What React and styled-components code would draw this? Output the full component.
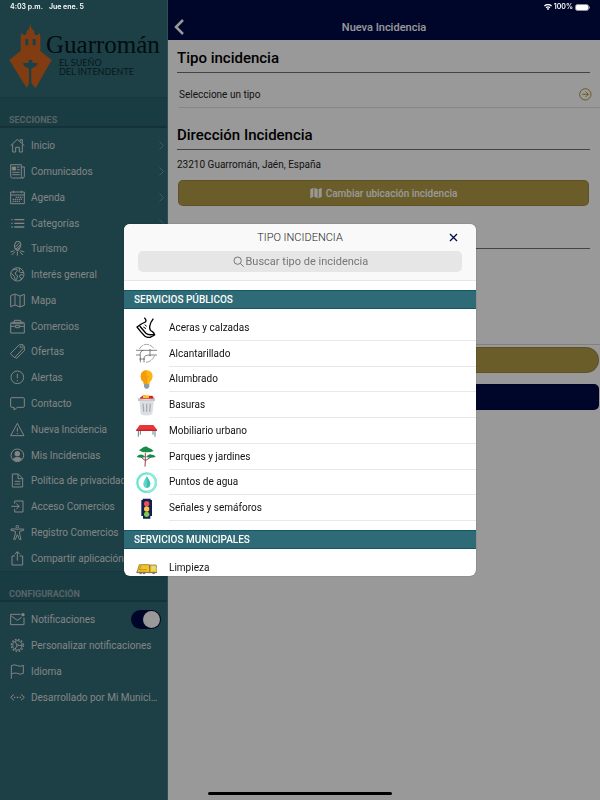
import React, { useState } from 'react';
import styled, { createGlobalStyle } from 'styled-components';

const GlobalStyle = createGlobalStyle`
  * {
    box-sizing: border-box;
  }

  body {
    margin: 0;
    background: #ffffff;
    color: #000000;
    font-family: Roboto, "Liberation Sans", sans-serif;
    font-size: 10px;
  }

  button, input {
    font: inherit;
  }

  h1, h2, h3, p, ul {
    margin: 0;
    padding: 0;
  }

  ul {
    list-style: none;
  }
`;

const Page = styled.div`
  display: grid;
  grid-template-columns: 28% 1fr;
  min-height: 100vh;
`;

const StatusBar = styled.div`
  position: fixed;
  top: 0;
  left: 0;
  right: 0;
  z-index: 3;
  display: flex;
  justify-content: space-between;
  padding: 0 10px;
  color: #ffffff;
  font-family: Inter, sans-serif;
  font-size: 7px;
  font-weight: 600;
  line-height: 14px;
`;

const StatusGroup = styled.div`
  display: flex;
  align-items: center;
  gap: ${props => props.$gap}px;
`;

const HomeIndicator = styled.div`
  position: fixed;
  bottom: 5px;
  left: 50%;
  z-index: 3;
  width: 184px;
  height: 3px;
  border-radius: 2px;
  background: #000000;
  transform: translateX(-50%);
`;

const Sidebar = styled.aside`
  background: #2f6b76;
  border-right: 1px solid #4d7f88;
  min-width: 0;
`;

const Logo = styled.a`
  display: flex;
  padding: 23px 0 8px 9px;
  color: #06141a;
  text-decoration: none;
`;

const LogoText = styled.div`
  margin-left: -6px;
  padding-top: 8px;
  white-space: nowrap;
`;

const LogoName = styled.div`
  font-family: "Liberation Serif", serif;
  font-size: 25px;
  line-height: 27px;
`;

const LogoSlogan = styled.div`
  padding-left: 13px;
  color: #0d2a31;
  font-family: Lato, sans-serif;
  font-size: 9px;
  line-height: 9px;
`;

const SideHeading = styled.h2`
  height: 31px;
  padding: 15px 9px 0;
  background: #2b6570;
  border-top: 1px solid #275d68;
  border-bottom: 2px solid #23545e;
  color: #93a6ab;
  font-size: 9px;
  font-weight: 700;
  line-height: 14px;
`;

const SideList = styled.ul`
  display: grid;
  grid-template-columns: minmax(0, 1fr);
  grid-auto-rows: 1fr;
  min-height: ${props => props.$height}px;
  margin-top: 5px;
`;

const SideRow = styled.li`
  display: flex;
  align-items: center;
  padding-right: 6px;
`;

const SideLink = styled.a`
  display: flex;
  align-items: center;
  flex: 1;
  gap: 6px;
  min-width: 0;
  padding-left: 10px;
  color: #dcdcdc;
  text-decoration: none;
`;

const SideLabel = styled.span`
  flex: 1;
  overflow: hidden;
  text-overflow: ellipsis;
  white-space: nowrap;
`;

const LineIcon = styled.svg`
  flex: none;
  width: 15px;
  height: 15px;
  fill: none;
  stroke: #dcdcdc;
  stroke-width: 3;
  stroke-linejoin: round;
`;

const Chevron = styled.svg`
  flex: none;
  width: 5px;
  height: 9px;
  margin-right: -3px;
  fill: none;
  stroke: #6c949c;
`;

const Toggle = styled.input`
  appearance: none;
  display: flex;
  flex: none;
  width: 30px;
  height: 19px;
  margin: 0;
  padding: 1px;
  border-radius: 10px;
  background: #909ba0;
  cursor: pointer;

  &::before {
    content: '';
    width: 17px;
    height: 17px;
    border-radius: 50%;
    background: #ffffff;
  }

  &:checked {
    justify-content: flex-end;
    background: #000a46;
  }
`;

const Main = styled.main`
  min-width: 0;
`;

const TopBar = styled.header`
  display: grid;
  grid-template-columns: 24px 1fr 24px;
  align-items: center;
  padding-top: 14px;
  height: 40px;
  background: #000a46;
`;

const BackButton = styled.button`
  padding: 0 0 0 6px;
  border: 0;
  background: none;
  line-height: 0;
  text-align: left;
  cursor: pointer;
`;

const TopTitle = styled.h1`
  color: #ffffff;
  font-size: 11px;
  font-weight: 500;
  text-align: center;
`;

const Block = styled.section`
  padding: 8px 10px 0 9px;
`;

const BlockTitle = styled.h2`
  height: 25px;
  border-bottom: 1px solid #707070;
  font-size: 15px;
  font-weight: 500;
  line-height: 20px;
`;

const TypeButton = styled.button`
  display: flex;
  align-items: center;
  justify-content: space-between;
  width: calc(100% - 11px);
  height: 26px;
  margin: 9px 0 9px 11px;
  padding: 0 8px 0 0;
  border: 0;
  border-bottom: 1px solid #e0e0e0;
  background: none;
  color: #222222;
  text-align: left;
`;

const Address = styled.p`
  height: 30px;
  color: #222222;
  line-height: 30px;
`;

const ActionButton = styled.button`
  display: flex;
  align-items: center;
  justify-content: center;
  gap: 4px;
  width: calc(100% - 2px);
  height: 26px;
  margin: 0 1px ${props => props.$after || 0}px;
  border: 1px solid rgba(0, 0, 0, 0.12);
  border-radius: ${props => (props.$round ? 13 : 5)}px;
  background: ${props => (props.$dark ? '#000a46' : '#b39b46')};
  color: #ffffff;
  font-weight: 500;
`;

const Rule = styled.hr`
  height: 1px;
  margin: ${props => props.$before}px 0 0;
  border: 0;
  background: ${props => (props.$light ? '#d8d8d8' : '#707070')};
`;

const Actions = styled.div`
  padding-top: 2px;
`;

const Backdrop = styled.div`
  position: fixed;
  inset: 0;
  z-index: 2;
  display: flex;
  align-items: center;
  justify-content: center;
  background: rgba(0, 0, 0, 0.4);
`;

const Modal = styled.div`
  display: flex;
  flex-direction: column;
  width: 352px;
  max-width: 100%;
  height: 352px;
  max-height: 100%;
  overflow: hidden;
  border-radius: 6px;
  background: #ffffff;
  box-shadow: 0 0 1px rgba(0, 0, 0, 0.7);
`;

const ModalHeader = styled.header`
  flex: none;
  height: 57px;
  padding: 0 14px;
  background: #f9f9f9;
  border-bottom: 1px solid #e6e6e6;
`;

const ModalTitleRow = styled.div`
  display: grid;
  grid-template-columns: 1fr auto 1fr;
  align-items: center;
  height: 27px;
`;

const ModalTitle = styled.h2`
  grid-column: 2;
  color: #222222;
  font-size: 11px;
  font-weight: 300;
`;

const CloseButton = styled.button`
  justify-self: end;
  padding: 4px;
  border: 0;
  background: none;
  line-height: 0;
  cursor: pointer;
`;

const SearchBox = styled.label`
  display: flex;
  align-items: center;
  justify-content: center;
  gap: 2px;
  height: 21px;
  border-radius: 5px;
  background: #e6e6e6;
`;

const SearchInput = styled.input`
  width: 122px;
  padding: 0;
  border: 0;
  outline: none;
  background: none;
  font-size: 11px;

  &::placeholder {
    color: #767676;
    opacity: 1;
  }
`;

const ModalBody = styled.div`
  flex: 1;
  overflow-y: auto;
  padding-top: 9px;
  scrollbar-width: none;
`;

const GroupTitle = styled.h3`
  height: 19px;
  padding-left: 10px;
  background: #2f6b76;
  border: 1px solid #125967;
  border-width: 1px 0;
  color: #ffffff;
  font-size: 10px;
  font-weight: 500;
  line-height: 17px;
`;

const TypeList = styled.ul`
  display: grid;
  grid-auto-rows: 1fr;
  min-height: ${props => props.$height}px;
  margin: 6px 0 9px;
`;

const TypeRow = styled.li`
  display: flex;
`;

const TypeOption = styled.button`
  display: flex;
  align-items: center;
  flex: 1;
  gap: 12px;
  padding: 0 0 0 12px;
  border: 0;
  background: none;
  text-align: left;
  cursor: pointer;
`;

const TypeLabel = styled.span`
  display: flex;
  align-items: center;
  align-self: stretch;
  flex: 1;
  border-bottom: 1px solid #e8e8e8;
  color: #111111;
`;

const TypeSvg = styled.svg`
  flex: none;
  width: 21px;
  height: 21px;
  fill: none;
`;

// Line icons, drawn on a 45 x 45 grid
const icons = {
  home: <path d="M2 23 L22 4 L43 23 M8 19 V42 H17 V28 H28 V42 H37 V19 M31 10 V5 H37 V17" />,
  news: (
    <>
      <path d="M34 42 H7 Q2 42 2 37 V2 H34 V37 Q34 42 39 42 Q43 42 43 37 V9 H35 M34 42 H39" />
      <path d="M7 9 H17 V18 H7 Z" fill="#dcdcdc" />
      <path d="M21 9 H29 M21 17 H29 M7 25 H29 M7 32 H29" />
    </>
  ),
  agenda: (
    <>
      <path d="M2 6 H43 V41 H2 Z M2 15 H43 M11 2 V9 M34 2 V9" />
      <path d="M17 22 H38 M8 28 H38 M8 34 H32" strokeWidth="4" strokeDasharray="4 2" />
    </>
  ),
  list: (
    <>
      <path d="M13 11 H43 M13 22 H43 M13 33 H43" strokeWidth="4" />
      <path d="M4 11 H8 M4 22 H8 M4 33 H8" strokeWidth="4" />
    </>
  ),
  tourism: (
    <>
      <ellipse cx="23" cy="13" rx="9" ry="12" transform="rotate(18 23 13)" />
      <path d="M15 19 L29 5 M18 24 L32 11 M15 22 L19 28 H26 L28 23 M22 31 V44 M15 32 L5 42 M29 32 L39 42 M13 29 L1 33 M31 29 L43 33" />
    </>
  ),
  globe: (
    <>
      <circle cx="22" cy="22" r="20" />
      <path d="M8 9 L20 6 L22 12 L15 18 L17 23 L23 27 L20 37 L16 40 L13 28 L4 19 M29 4 L27 13 L32 17 L42 16 M41 24 L31 23 L28 29 L34 33 L32 40" />
    </>
  ),
  map: <path d="M2 8 L15 3 L30 9 L43 4 V37 L30 42 L15 36 L2 41 Z M15 3 V36 M30 9 V42" />,
  shop: <path d="M2 13 Q2 10 5 10 H40 Q43 10 43 13 V42 H2 Z M13 10 V4 H32 V10 M2 22 H17 M28 22 H43 M17 19 H28 V26 H17 Z M4 14 H41" />,
  tags: (
    <>
      <path d="M28 2 H39 V14 L14 41 L1 29 Z" />
      <path d="M42 5 L44 7 V19 L20 43 L16 40" />
      <circle cx="32" cy="9" r="2" />
    </>
  ),
  alert: (
    <>
      <circle cx="22" cy="22" r="19" />
      <path d="M22 11 V25 M22 30 V34" />
    </>
  ),
  chat: <path d="M5 5 H40 Q43 5 43 8 V31 Q43 34 40 34 H22 L12 42 V34 H5 Q2 34 2 31 V8 Q2 5 5 5 Z" />,
  warning: <path d="M22 4 L42 41 H2 Z M22 17 V29 M22 33 V36" />,
  user: (
    <>
      <circle cx="22" cy="22" r="19" />
      <circle cx="22" cy="17" r="8" fill="#dcdcdc" stroke="none" />
      <path d="M8 34 Q12 27 22 27 Q32 27 36 34 Q30 40 22 40 Q14 40 8 34 Z" fill="#dcdcdc" stroke="none" />
    </>
  ),
  document: <path d="M7 3 H25 L38 16 V42 H7 Z M24 3 V17 H38 M14 25 H31 M14 33 H31" />,
  login: <path d="M14 14 V6 H39 V39 H14 V30 M4 22 H27 M19 14 L28 22 L19 30" />,
  person: (
    <>
      <circle cx="22" cy="5" r="4" />
      <path d="M3 12 H18 L22 14 L26 12 H41 V16 L29 19 V27 L33 43 H28 L22 29 L16 43 H11 L16 27 V19 L3 16 Z" />
    </>
  ),
  share: <path d="M15 15 H6 V42 H38 V15 H29 M22 29 V2 M14 10 L22 2 L30 10" />,
  mail: (
    <>
      <path d="M32 7 H2 V38 H42 V17 M4 12 L22 25 L35 16" />
      <circle cx="39" cy="8" r="5" fill="#dcdcdc" stroke="none" />
    </>
  ),
  gear: (
    <>
      <circle cx="22" cy="22" r="18" strokeWidth="4" strokeDasharray="5 4.4" />
      <circle cx="22" cy="22" r="14" />
      <circle cx="22" cy="22" r="3" />
      <path d="M25 22 H36 M20 19 L15 10 M20 25 L15 34" />
    </>
  ),
  flag: <path d="M4 44 V5 Q13 0 22 5 Q31 9 40 4 V28 Q31 33 22 28 Q13 25 4 30" />,
  code: (
    <>
      <path d="M12 13 L2 22 L12 31 M33 13 L43 22 L33 31" />
      <path d="M12 22 H16 M20 22 H25 M29 22 H33" strokeWidth="4" />
    </>
  ),
};

// Coloured icons, drawn on a 63 x 63 grid
const typeIcons = {
  sidewalk: (
    <g stroke="#000000" strokeWidth="4" strokeLinejoin="round">
      <path d="M25 2 Q33 9 28 15 L16 21 L3 30 L14 44 L26 57 Q32 62 42 61 L56 54 Q54 46 48 43 Q40 40 41 28 Q42 18 52 5" />
      <path d="M11 27 L29 48 Q37 56 54 52" />
      <path d="M26 23 L32 28 M22 30 L30 35" strokeWidth="3" />
    </g>
  ),
  sewer: (
    <g stroke="#777777" strokeWidth="2">
      <path d="M10 18 Q17 5 32 4 Q47 5 54 18 M56 38 Q47 57 28 58" strokeDasharray="16 2" />
      <path d="M0 22 H22 M42 22 H63 M42 18 V40 M42 36 H63 M0 36 H12 Q13 22 24 22 H42 M13 36 V58 M24 58 V45 Q25 36 42 36 M10 48 H27" stroke="#444444" />
    </g>
  ),
  bulb: (
    <>
      <path d="M32 4 Q50 5 50 23 Q49 32 41 40 V46 H23 V40 Q14 32 14 23 Q14 5 32 4 Z" fill="#fbb516" />
      <path d="M32 4 Q14 5 14 23 Q14 32 23 40 V46 H32 Z" fill="#f59c0b" />
      <path d="M24 21 L32 26 L40 21 M32 26 V44" stroke="#e8930a" strokeWidth="2" />
      <path d="M24 45 H40 V54 L35 59 H29 L24 54 Z" fill="#8e9da5" />
    </>
  ),
  trash: (
    <>
      <path d="M11 9 L22 1 L34 3 L49 2 L55 11 H11 Z" fill="#d8202c" />
      <path d="M21 1 H39 V9 H21 Z" fill="#ffc51c" />
      <path d="M6 10 Q31 17 57 10 V18 H6 Z" fill="#bfc4c9" />
      <path d="M10 17 H54 L49 57 Q31 66 14 57 Z" fill="#dcdee1" />
      <path d="M21 26 L23 50 M32 26 V50 M43 26 L41 50" stroke="#a5adb3" strokeWidth="4" />
    </>
  ),
  bench: (
    <>
      <path d="M7 31 V50 M57 31 V50 M13 29 V44 M51 29 V44" stroke="#56868c" strokeWidth="3" />
      <path d="M11 15 H52 L63 29 V33 H1 V29 Z" fill="#e8353b" />
      <path d="M1 29 H63 V33 H1 Z" fill="#c52229" />
    </>
  ),
  tree: (
    <>
      <path d="M27 62 L28 44 L15 33 M28 44 L45 33 M28 44 V20" stroke="#93414b" strokeWidth="3" />
      <path d="M9 13 Q16 9 22 4 Q31 -1 37 5 Q47 7 53 15 Q41 20 27 18 Q18 20 9 13 Z" fill="#188b46" />
      <path d="M2 33 Q10 23 21 27 L28 33 Q15 37 2 33 Z M30 33 Q39 21 47 26 Q54 25 59 33 Q44 38 30 33 Z" fill="#188b46" />
    </>
  ),
  water: (
    <>
      <circle cx="32" cy="32" r="28" stroke="#6be5cf" strokeWidth="7" />
      <path d="M32 4 A28 28 0 0 1 32 60" stroke="#8eeadb" strokeWidth="7" />
      <path d="M32 13 Q43 29 43 36 Q42 47 32 48 Q22 47 22 36 Q22 29 32 13 Z" fill="#60d6c7" />
      <path d="M32 13 Q43 29 43 36 Q42 47 32 48 Z" fill="#3dbfb4" />
    </>
  ),
  lights: (
    <>
      <path d="M20 2 H44 V6 H48 V54 H43 V62 H21 V54 H16 V6 H20 Z" fill="#10204f" />
      <circle cx="32" cy="17" r="8" fill="#e94f55" />
      <circle cx="32" cy="33" r="8" fill="#ffc44c" />
      <circle cx="32" cy="49" r="8" fill="#83c851" />
    </>
  ),
  truck: (
    <>
      <path d="M3 42 L10 20 H40 L42 44 H3 Z" fill="#f6c21d" stroke="#71652f" strokeWidth="2" />
      <path d="M42 21 H60 L63 31 V44 H42 Z" fill="#ffd22d" stroke="#71652f" strokeWidth="2" />
      <path d="M49 25 H57 L59 32 H49 Z" fill="#c4dbe2" />
      <path d="M15 23 L10 35 H32" stroke="#9b811c" strokeWidth="2" />
      <path d="M1 43 H63" stroke="#777777" strokeWidth="3" />
      <circle cx="14" cy="45" r="4" fill="#777777" />
      <circle cx="24" cy="45" r="4" fill="#777777" />
      <circle cx="53" cy="45" r="4" fill="#777777" />
    </>
  ),
};

const sections = [
  ['home', 'Inicio'],
  ['news', 'Comunicados'],
  ['agenda', 'Agenda'],
  ['list', 'Categorías'],
  ['tourism', 'Turismo'],
  ['globe', 'Interés general'],
  ['map', 'Mapa'],
  ['shop', 'Comercios'],
  ['tags', 'Ofertas'],
  ['alert', 'Alertas'],
  ['chat', 'Contacto'],
  ['warning', 'Nueva Incidencia'],
  ['user', 'Mis Incidencias'],
  ['document', 'Política de privacidad'],
  ['login', 'Acceso Comercios'],
  ['person', 'Registro Comercios'],
  ['share', 'Compartir aplicación'],
];

const settings = [
  ['gear', 'Personalizar notificaciones'],
  ['flag', 'Idioma'],
  ['code', 'Desarrollado por Mi Municipio'],
];

const groups = [
  {
    title: 'SERVICIOS PÚBLICOS',
    height: 206,
    types: [
      ['sidewalk', 'Aceras y calzadas'],
      ['sewer', 'Alcantarillado'],
      ['bulb', 'Alumbrado'],
      ['trash', 'Basuras'],
      ['bench', 'Mobiliario urbano'],
      ['tree', 'Parques y jardines'],
      ['water', 'Puntos de agua'],
      ['lights', 'Señales y semáforos'],
    ],
  },
  {
    title: 'SERVICIOS MUNICIPALES',
    height: 26,
    types: [['truck', 'Limpieza']],
  },
];

const Icon = ({ name }) => (
  <LineIcon viewBox="0 0 45 45" aria-hidden="true">{icons[name]}</LineIcon>
);

const SideItem = ({ icon, label, arrow }) => (
  <SideRow>
    <SideLink href="#">
      <Icon name={icon} />
      <SideLabel>{label}</SideLabel>
    </SideLink>
    {arrow && <Chevron viewBox="0 0 5 9"><path d="M0.5 0.5 L4.5 4.5 L0.5 8.5" /></Chevron>}
  </SideRow>
);

const TownLogo = () => (
  <Logo href="#">
    <svg width="43" height="66" viewBox="0 0 129 198" aria-hidden="true">
      <path
        d="M64 1 L67 16 L75 24 L78 36 H87 L91 29 L94 38 V84 L128 111 L80 195 L67 181 V137 L83 128 L86 121 L70 119 Q72 110 64 110 Q57 110 59 119 L42 121 L45 129 L60 137 V181 L53 195 L1 111 L35 84 V38 L39 29 L43 36 H51 L54 24 L61 16 Z M49 48 V67 H58 V48 Z M71 48 V67 H80 V48 Z"
        fill="#d9641f"
        fillRule="evenodd"
      />
    </svg>
    <LogoText>
      <LogoName>Guarromán</LogoName>
      <LogoSlogan>EL SUEÑO<br />DEL INTENDENTE</LogoSlogan>
    </LogoText>
  </Logo>
);

const TypeModal = ({ onClose }) => {
  const [query, setQuery] = useState('');

  return (
    <Backdrop>
      <Modal role="dialog" aria-labelledby="modal-title">
        <ModalHeader>
          <ModalTitleRow>
            <ModalTitle id="modal-title">TIPO INCIDENCIA</ModalTitle>
            <CloseButton type="button" aria-label="Cerrar" onClick={onClose}>
              <svg width="9" height="9" viewBox="0 0 9 9" stroke="#000a46" strokeWidth="1.3">
                <path d="M1 1 L8 8 M8 1 L1 8" />
              </svg>
            </CloseButton>
          </ModalTitleRow>
          <SearchBox>
            <svg width="11" height="11" viewBox="0 0 33 33" fill="none" stroke="#767676" strokeWidth="3" aria-hidden="true">
              <circle cx="14" cy="14" r="11" />
              <path d="M22 22 L32 32" />
            </svg>
            <SearchInput
              aria-label="Buscar tipo de incidencia"
              placeholder="Buscar tipo de incidencia"
              value={query}
              onChange={e => setQuery(e.target.value)}
            />
          </SearchBox>
        </ModalHeader>
        <ModalBody>
          {groups.map(group => (
            <section key={group.title}>
              <GroupTitle>{group.title}</GroupTitle>
              <TypeList $height={group.height}>
                {group.types
                  .filter(([, label]) => label.toLowerCase().includes(query.toLowerCase()))
                  .map(([icon, label]) => (
                    <TypeRow key={label}>
                      <TypeOption type="button" onClick={onClose}>
                        <TypeSvg viewBox="0 0 63 63" aria-hidden="true">{typeIcons[icon]}</TypeSvg>
                        <TypeLabel>{label}</TypeLabel>
                      </TypeOption>
                    </TypeRow>
                  ))}
              </TypeList>
            </section>
          ))}
        </ModalBody>
      </Modal>
    </Backdrop>
  );
};

const App = () => {
  const [open, setOpen] = useState(true);
  const [notify, setNotify] = useState(true);

  return (
    <>
      <GlobalStyle />
      <StatusBar>
        <StatusGroup $gap={6}>
          <span>4:03 p.m.</span>
          <span>Jue ene. 5</span>
        </StatusGroup>
        <StatusGroup $gap={2}>
          <svg width="8" height="6" viewBox="0 0 24 18" fill="none" stroke="#ffffff" strokeWidth="4">
            <path d="M1 6 Q12 -3 23 6 M6 11 Q12 6 18 11" />
            <circle cx="12" cy="15" r="1" />
          </svg>
          <span>100%</span>
          <svg width="15" height="7" viewBox="0 0 15 7">
            <rect x="0.5" y="0.5" width="13" height="6" rx="2" fill="#ffffff" stroke="#8c8fa0" />
            <path d="M14.5 2.5 V4.5" stroke="#8c8fa0" />
          </svg>
        </StatusGroup>
      </StatusBar>

      <Page>
        <Sidebar>
          <TownLogo />
          <nav>
            <SideHeading>SECCIONES</SideHeading>
            <SideList $height={438}>
              {sections.map(([icon, label]) => (
                <SideItem key={label} icon={icon} label={label} arrow />
              ))}
            </SideList>
            <SideHeading>CONFIGURACIÓN</SideHeading>
            <SideList $height={103}>
              <SideRow>
                <SideLink as="label" htmlFor="notify">
                  <Icon name="mail" />
                  <SideLabel>Notificaciones</SideLabel>
                </SideLink>
                <Toggle
                  id="notify"
                  type="checkbox"
                  checked={notify}
                  onChange={() => setNotify(!notify)}
                />
              </SideRow>
              {settings.map(([icon, label]) => (
                <SideItem key={label} icon={icon} label={label} />
              ))}
            </SideList>
          </nav>
        </Sidebar>

        <Main>
          <TopBar>
            <BackButton type="button" aria-label="Volver">
              <svg width="10" height="16" viewBox="0 0 10 16" fill="none" stroke="#ffffff" strokeWidth="2.5">
                <path d="M9 1 L2 8 L9 15" />
              </svg>
            </BackButton>
            <TopTitle>Nueva Incidencia</TopTitle>
          </TopBar>

          <Block>
            <BlockTitle>Tipo incidencia</BlockTitle>
          </Block>
          <TypeButton type="button" onClick={() => setOpen(true)}>
            Seleccione un tipo
            <svg width="13" height="13" viewBox="0 0 39 39" fill="none" stroke="#b8972b" strokeWidth="3" aria-hidden="true">
              <circle cx="19" cy="19" r="17" />
              <path d="M10 19 H28 M20 11 L28 19 L20 27" />
            </svg>
          </TypeButton>
          <Block>
            <BlockTitle>Dirección Incidencia</BlockTitle>
            <Address>23210 Guarromán, Jaén, España</Address>
            <ActionButton type="button">
              <svg width="12" height="12" viewBox="0 0 36 36" fill="#ffffff" aria-hidden="true">
                <path d="M1 7 L10 2 V29 L1 34 Z M13 2 L23 7 V34 L13 29 Z M26 7 L35 2 V29 L26 34 Z" />
              </svg>
              Cambiar ubicación incidencia
            </ActionButton>
            <Rule $before={42} />
          </Block>
          <Rule $before={95} $light />
          <Actions>
            <ActionButton type="button" aria-label="Añadir imagen" $round $after={11} />
            <ActionButton type="button" aria-label="Enviar incidencia" $dark />
          </Actions>
        </Main>
      </Page>

      {open && <TypeModal onClose={() => setOpen(false)} />}
      <HomeIndicator />
    </>
  );
};

export default App;
